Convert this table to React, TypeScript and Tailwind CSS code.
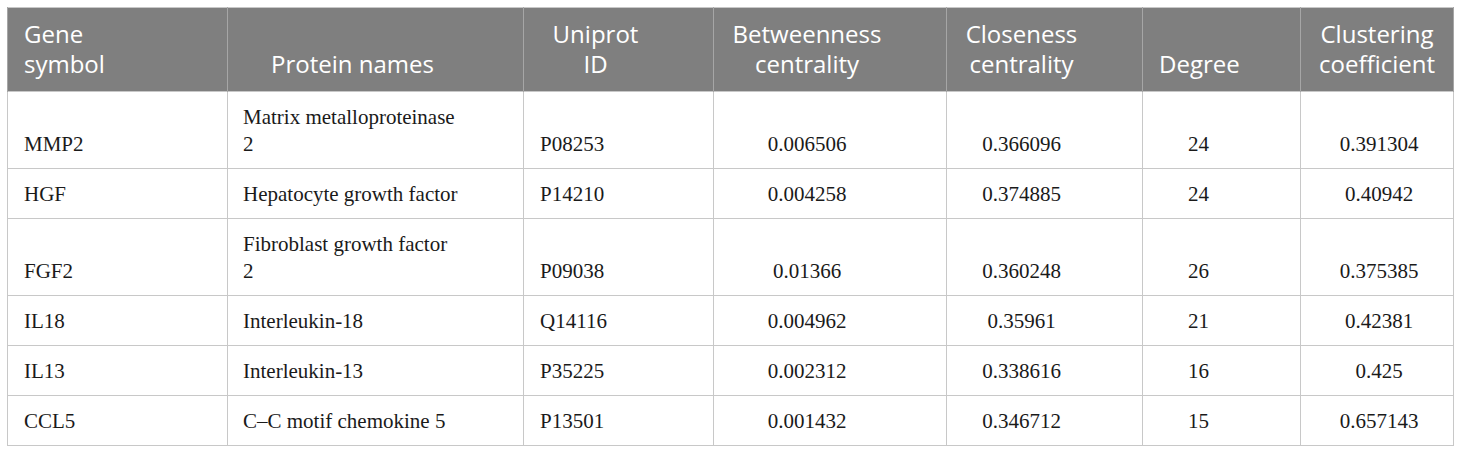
const rows = [
    { gene: "MMP2", protein: "Matrix metalloproteinase\n2", id: "P08253", btw: "0.006506", cls: "0.366096", deg: "24", coef: "0.391304" },
    { gene: "HGF", protein: "Hepatocyte growth factor", id: "P14210", btw: "0.004258", cls: "0.374885", deg: "24", coef: "0.40942" },
    { gene: "FGF2", protein: "Fibroblast growth factor\n2", id: "P09038", btw: "0.01366", cls: "0.360248", deg: "26", coef: "0.375385" },
    { gene: "IL18", protein: "Interleukin-18", id: "Q14116", btw: "0.004962", cls: "0.35961", deg: "21", coef: "0.42381" },
    { gene: "IL13", protein: "Interleukin-13", id: "P35225", btw: "0.002312", cls: "0.338616", deg: "16", coef: "0.425" },
    { gene: "CCL5", protein: "C\u2013C motif chemokine 5", id: "P13501", btw: "0.001432", cls: "0.346712", deg: "15", coef: "0.657143" },
];

const th = "align-bottom font-normal text-white text-[24px] leading-[30px] pt-[11px] pb-[12px] border-x border-[#a6a6a6]";
const td = "align-bottom text-[21px] leading-[27px] pt-[12px] pb-[10px] border border-[#c8c8c8]";

export default function App() {
    return (
        <div className="bg-white w-[1460px] h-[455px] pt-[7px] pl-[7px]">
            <table className="table-fixed border-collapse w-[1446px] border border-[#c8c8c8]">
                <colgroup>
                    <col className="w-[220px]" />
                    <col className="w-[296px]" />
                    <col className="w-[190px]" />
                    <col className="w-[233px]" />
                    <col className="w-[196px]" />
                    <col className="w-[158px]" />
                    <col className="w-[153px]" />
                </colgroup>
                <thead className="bg-[#7f7f7f] font-['Open_Sans',sans-serif]">
                    <tr>
                        <th className={`${th} text-left pl-4 pr-4`}>Gene<br />symbol</th>
                        <th className={`${th} text-center pl-4 pr-[62px]`}>Protein names</th>
                        <th className={`${th} text-center pl-4 pr-[62px]`}>Uniprot<br />ID</th>
                        <th className={`${th} text-center pl-4 pr-[62px]`}>Betweenness<br />centrality</th>
                        <th className={`${th} text-center pl-4 pr-[62px]`}>Closeness<br />centrality</th>
                        <th className={`${th} text-center pl-4 pr-[62px]`}>Degree</th>
                        <th className={`${th} text-center pl-2 pr-2`}>Clustering<br />coefficient</th>
                    </tr>
                </thead>
                <tbody className="text-[#1a1a1a] font-['Liberation_Serif',serif]">
                    {rows.map((r) => (
                        <tr key={r.gene}>
                            <td className={`${td} text-left pl-4 pr-4`}>{r.gene}</td>
                            <td className={`${td} text-left whitespace-pre-line pl-[15px] pr-[40px]`}>{r.protein}</td>
                            <td className={`${td} text-left pl-4 pr-4`}>{r.id}</td>
                            <td className={`${td} text-center pl-4 pr-[62px]`}>{r.btw}</td>
                            <td className={`${td} text-center pl-4 pr-[62px]`}>{r.cls}</td>
                            <td className={`${td} text-center pl-4 pr-[62px]`}>{r.deg}</td>
                            <td className={`${td} text-center pl-[20px] pr-4`}>{r.coef}</td>
                        </tr>
                    ))}
                </tbody>
            </table>
        </div>
    );
}
